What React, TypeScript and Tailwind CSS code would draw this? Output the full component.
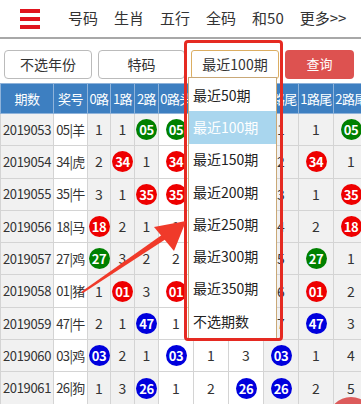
import React from "react";

type Ball = { b: string; c: "r" | "g" | "u" };
type Val = number | string | Ball;

const R = (b: string): Ball => ({ b, c: "r" });
const G = (b: string): Ball => ({ b, c: "g" });
const U = (b: string): Ball => ({ b, c: "u" });

const rows: { q: string; n: string; v: Val[] }[] = [
  { q: "2019053", n: "05|羊", v: [1, 1, G("05"), G("05"), 2, 1, 1, 1, G("05")] },
  { q: "2019054", n: "34|虎", v: [2, R("34"), 1, R("34"), 1, 2, 2, R("34"), 1] },
  { q: "2019055", n: "35|牛", v: [3, 1, R("35"), R("35"), 2, 1, 3, 1, R("35")] },
  { q: "2019056", n: "18|马", v: [R("18"), 2, 1, 1, 3, 2, 4, 2, R("18")] },
  { q: "2019057", n: "27|鸡", v: [G("27"), 3, 2, 2, 4, 3, 5, G("27"), 1] },
  { q: "2019058", n: "01|猪", v: [1, R("01"), 3, R("01"), 5, 4, 6, R("01"), 2] },
  { q: "2019059", n: "47|牛", v: [2, 1, U("47"), 1, 6, 5, 7, U("47"), 3] },
  { q: "2019060", n: "03|鸡", v: [U("03"), 2, 1, U("03"), 1, 3, U("03"), 1, 4] },
  { q: "2019061", n: "26|狗", v: [1, 3, U("26"), 1, 2, U("26"), U("26"), 2, 5] },
];

const heads = ["期数", "奖号", "0路", "1路", "2路", "0路头", "1路头", "2路头", "0路尾", "1路尾", "2路尾"];
const widths = [53, 34, 23, 24, 24, 35, 35, 35, 35, 35, 35];

function Cell({ v }: { v: Val }) {
  if (typeof v === "object") {
    const bg = v.c === "r" ? "bg-[#ee0000]" : v.c === "g" ? "bg-[#008000]" : "bg-[#0000dd]";
    return (
      <span
        className={`inline-flex h-[21px] w-[21px] items-center justify-center rounded-full text-[13px] font-bold leading-none tracking-[-0.3px] text-white ${bg}`}
      >
        {v.b}
      </span>
    );
  }
  return <span>{v}</span>;
}

export default function App() {
  const font = { fontFamily: '"Noto Sans CJK SC", "Noto Sans", sans-serif' };
  return (
    <div className="relative h-[404px] w-[361px] overflow-hidden bg-white text-[#333]" style={font}>
      {/* nav */}
      <div className="flex h-[39px] items-center border-b-2 border-[#a8a8a8] bg-white">
        <div className="ml-[20px] flex w-[20px] flex-col gap-[4px]">
          <div className="h-[4px] bg-[#e0141e]" />
          <div className="h-[4px] bg-[#e0141e]" />
          <div className="h-[4px] bg-[#e0141e]" />
        </div>
        <div className="ml-[28px] flex items-center gap-[16px] text-[15px] text-[#333]">
          <span>号码</span>
          <span>生肖</span>
          <span>五行</span>
          <span>全码</span>
          <span>和50</span>
          <span>更多&gt;&gt;</span>
        </div>
      </div>

      {/* filters */}
      <div className="flex h-[44px] items-center gap-[6px] pl-[4px] pt-[6px] text-[14px]">
        <div className="flex h-[29px] w-[88px] items-center justify-center rounded-[4px] border border-[#bbb] bg-white">
          不选年份
        </div>
        <div className="flex h-[29px] w-[87px] items-center justify-center rounded-[4px] border border-[#bbb] bg-white">
          特码
        </div>
        <div className="flex h-[29px] w-[88px] items-center justify-center rounded-[3px] border border-[#dcae62] bg-white">
          最近100期
        </div>
        <div className="flex h-[29px] w-[69px] items-center justify-center rounded-[4px] bg-[#dd5250] text-[13px] text-white">
          查询
        </div>
      </div>

      {/* table */}
      <div className="w-[361px] overflow-hidden">
        <table className="table-fixed border-collapse" style={{ width: 368 }}>
          <colgroup>
            {widths.map((w, i) => (
              <col key={i} style={{ width: w }} />
            ))}
          </colgroup>
          <thead>
            <tr className="h-[30px] bg-[#3d7fc1] text-white">
              {heads.map((h, i) => (
                <th
                  key={i}
                  className="overflow-hidden whitespace-nowrap border border-[#8fb3da] p-0 text-center text-[13px] font-normal tracking-[-0.6px]"
                >
                  {h}
                </th>
              ))}
            </tr>
          </thead>
          <tbody>
            {rows.map((r, ri) => (
              <tr key={ri} className="h-[32.3px] text-[14px]">
                <td className="overflow-hidden whitespace-nowrap border border-[#d4d4d4] bg-[#f1f1f1] p-0 text-center text-[13px] tracking-[-0.35px]">
                  {r.q}
                </td>
                <td className="overflow-hidden whitespace-nowrap border border-[#d4d4d4] bg-white p-0 text-center text-[13px] tracking-[-0.6px]">
                  {r.n}
                </td>
                {r.v.map((v, i) => (
                  <td
                    key={i}
                    className={`whitespace-nowrap border border-[#d4d4d4] p-0 text-center ${
                      i >= 3 && i <= 5 ? "bg-white" : "bg-[#f1f1f1]"
                    }`}
                  >
                    <Cell v={v} />
                  </td>
                ))}
              </tr>
            ))}
          </tbody>
        </table>
      </div>

      {/* dropdown */}
      <div className="absolute left-[188px] top-[77px] w-[89px] border border-[#c9a877] bg-white py-[1px] text-[14px] text-[#222]">
        {["最近50期", "最近100期", "最近150期", "最近200期", "最近250期", "最近300期", "最近350期", "不选期数"].map(
          (t, i) => (
            <div
              key={i}
              className={`flex h-[32.3px] items-center pl-[4px] ${i === 1 ? "bg-[#a9d6ee] text-white" : ""}`}
            >
              {t}
            </div>
          )
        )}
      </div>

      {/* red highlight box */}
      <div className="absolute left-[184px] top-[40px] h-[301px] w-[99px] rounded-[4px] border-[3px] border-[#e52a22]" />

      {/* arrow */}
      <svg className="absolute left-0 top-0" width="361" height="404" viewBox="0 0 361 404">
        <polygon points="81,292 166,232 169,237 83,293" fill="#f03a2a" />
        <polygon points="186,221 154,227 174,251" fill="#f03a2a" />
      </svg>

      {/* floating circle */}
      <div className="absolute left-[328px] top-[397px] h-[46px] w-[46px] rounded-full bg-[#dc5b5b]" />
    </div>
  );
}
